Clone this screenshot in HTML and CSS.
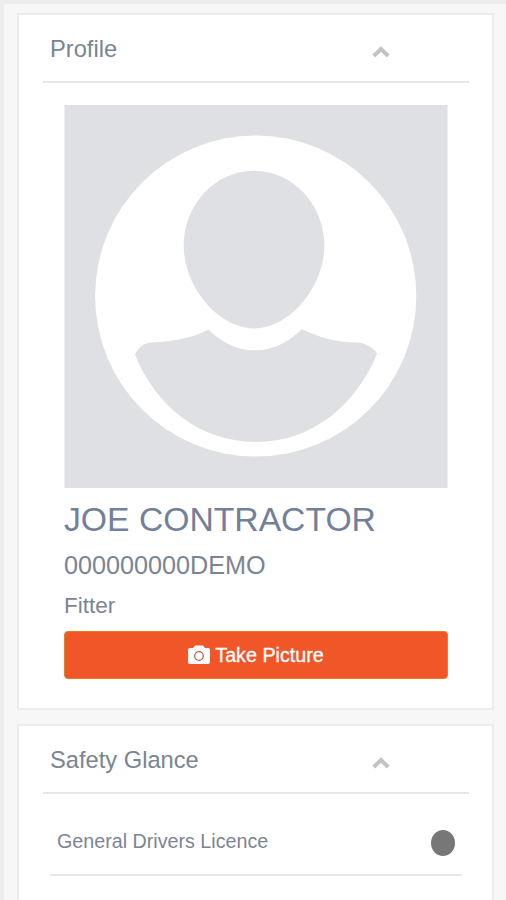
FILE: index.html
```html
<!DOCTYPE html>
<html lang="en">
<head>
  <meta charset="UTF-8" />
  <meta name="viewport" content="width=device-width, initial-scale=1" />
  <title>Profile</title>
  <link rel="stylesheet" href="styles.css">
</head>
<body>
  <div class="content">
    <div class="panel">
      <div class="panel-title">
        <h2>Profile</h2>
        <svg class="chevron" viewBox="0 0 18 12"><path d="M1.8 10 L9 3 L16.2 10" /></svg>
      </div>
      <div class="profile">
        <svg class="avatar" viewBox="0 0 384 384">
          <rect width="384" height="384" fill="#dfe0e4" />
          <circle cx="191.7" cy="191.5" r="161" fill="#fff" />
          <path fill="#dfe0e4" d="M190 66 C229 66 260.500 100 260.500 141 C260.500 182 226 224 190 224 C154 224 119.500 182 119.500 141 C119.500 100 151 66 190 66 Z" />
          <path fill="#dfe0e4" d="M144.500 225 C155 236 172 246 191 246 C210 246 227 236 238 224.500 C255 233 273 238 293 238 C301 238 309 243 313.500 249 C293 300 249 338 192 338 C136 338 91 302 70.500 250 C75 242 80 238 88 238 C108 237 128 234 144.500 225 Z" />
        </svg>
        <h1 class="name">JOE CONTRACTOR</h1>
        <div class="code">000000000DEMO</div>
        <div class="role">Fitter</div>
        <button class="picture-btn">
          <svg class="camera" viewBox="0 0 22 20">
            <path fill="#fff" d="M2 3 H5 L7 .5 H15 L17 3 H20 Q22 3 22 5 V17 Q22 19 20 19 H2 Q0 19 0 17 V5 Q0 3 2 3 Z" />
            <circle cx="11" cy="11" r="4.300" fill="none" stroke="#b9624b" stroke-width="1.300" />
          </svg>
          <span>Take Picture</span>
        </button>
      </div>
    </div>

    <div class="panel safety">
      <div class="panel-title">
        <h2>Safety Glance</h2>
        <svg class="chevron" viewBox="0 0 18 12"><path d="M1.8 10 L9 3 L16.2 10" /></svg>
      </div>
      <div class="licence-row">
        <span>General Drivers Licence</span>
        <span class="status"></span>
      </div>
    </div>
  </div>
</body>
</html>
```
FILE: styles.css
```css
* {
  box-sizing: border-box;
}
body {
  margin: 0;
  font-family: "Liberation Sans", Arial, sans-serif;
  background: #f7f7f7;
  color: #7b8592;
}
.content {
  display: flex;
  flex-direction: column;
  gap: 14px;
  height: 900px;
  padding: 9px 12px 0 13px;
  border-top: 4px solid #ededed;
  border-left: 4px solid #ededed;
}
.panel {
  flex: none;
  height: 697px;
  padding: 0 23px 0 24px;
  background: #fff;
  border: 2px solid #ececec;
}
.safety {
  flex: 1;
  border-bottom: none;
}
.panel-title {
  display: flex;
  justify-content: space-between;
  height: 68px;
  padding: 20px 79px 0 7px;
  border-bottom: 2px solid #e6e6e6;
}
.panel-title h2 {
  margin: 0;
  font-size: 23.7px;
  line-height: 28px;
  font-weight: normal;
}
.chevron {
  width: 18px;
  height: 12px;
  margin-top: 11px;
}
.chevron path {
  fill: none;
  stroke: #c2c2c2;
  stroke-width: 4;
}
.profile {
  padding: 22px 21px 0;
}
.avatar {
  display: block;
  width: 384px;
  height: 383px;
}
.name {
  margin: 11px 0 0;
  font-size: 33.7px;
  line-height: 40px;
  font-weight: normal;
  color: #73809a;
}
.code {
  margin-top: 11px;
  font-size: 25.2px;
  line-height: 30px;
}
.role {
  margin-top: 13px;
  font-size: 22.5px;
  line-height: 26px;
}
.picture-btn {
  display: flex;
  justify-content: center;
  align-items: center;
  gap: 5px;
  width: 384px;
  height: 48px;
  margin-top: 12px;
  padding: 0;
  background: #f15628;
  border: 1px solid #ee7a22;
  border-radius: 4px;
  color: #fff;
  font-family: inherit;
  font-size: 19.7px;
  -webkit-text-stroke: 0.3px #fff;
}
.camera {
  width: 22px;
  height: 20px;
}
.licence-row {
  display: flex;
  justify-content: space-between;
  height: 82px;
  margin: 0 7px;
  padding: 36px 7px 0;
  border-bottom: 2px solid #e9e9e9;
  font-size: 19.7px;
  line-height: 22px;
}
.status {
  width: 24px;
  height: 26px;
  border-radius: 50%;
  background: #777;
}
```
